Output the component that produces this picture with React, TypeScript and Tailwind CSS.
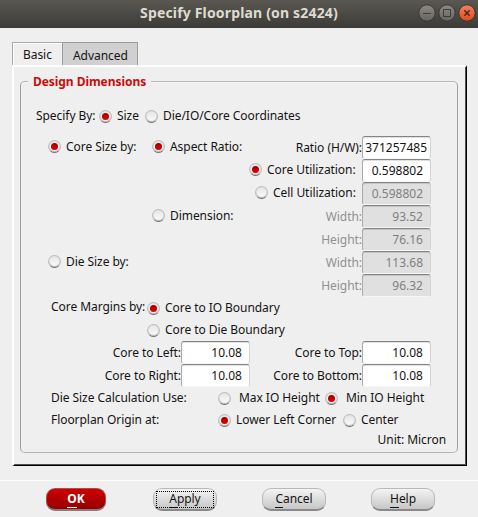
import type { ReactNode } from "react";

function Radio({ on = false, className = "" }: { on?: boolean; className?: string }) {
  return (
    <span
      className={`flex size-[13px] shrink-0 items-center justify-center rounded-full border border-[#bdbdbd] border-b-[#6c6c6c] bg-linear-to-b from-[#e4e4e4] to-[#fdfdfd] shadow-[inset_0_-1px_1px_rgba(0,0,0,0.28)] ${className}`}
    >
      {on && <span className="size-[7px] rounded-full bg-linear-to-b from-[#980000] to-[#e60000]" />}
    </span>
  );
}

function Text({ children, className = "" }: { children: ReactNode; className?: string }) {
  return <span className={`shrink-0 tracking-[-0.055px] whitespace-nowrap ${className}`}>{children}</span>;
}

function Field({ value, disabled = false, overflowing = false }: { value: string; disabled?: boolean; overflowing?: boolean }) {
  return (
    <span
      className={`flex h-[23px] w-[69px] shrink-0 items-center justify-end overflow-hidden rounded-[3px] border border-t-[#858585] border-r-[#d2d2d2] border-b-[#f6f6f6] border-l-[#aaaaaa] shadow-[inset_0_1px_0_rgba(0,0,0,0.12)] ${
        overflowing ? "pr-[3px]" : "pr-[7px]"
      } ${disabled ? "bg-[#e0e0e0] text-[#808080]" : "bg-white text-[#141414]"}`}
    >
      {value}
    </span>
  );
}

function Row({ children, className = "h-[23px]" }: { children?: ReactNode; className?: string }) {
  return <div className={`flex items-center ${className}`}>{children}</div>;
}

function Button({
  label,
  primary = false,
  focused = false,
  className = "",
}: {
  label: string;
  primary?: boolean;
  focused?: boolean;
  className?: string;
}) {
  const tone = primary
    ? "w-[60px] border-[#a85050] border-b-[#808080] from-[#cf0000] to-[#960000] font-bold text-white"
    : "w-[64px] border-[#b9b9b9] border-b-[#898989] from-[#f4f4f4] to-[#c6c6c6] text-[#141414]";
  return (
    <button
      className={`relative flex h-[23px] shrink-0 items-center justify-center rounded-[9px] border border-b-2 bg-linear-to-b ${tone} ${className}`}
    >
      <span className="tracking-[-0.055px]">
        <span className="border-b border-current">{label[0]}</span>
        {label.slice(1)}
      </span>
      {focused && <span className="absolute inset-x-[2px] top-[2px] bottom-[1px] border border-dotted border-black" />}
    </button>
  );
}

export default function App() {
  return (
    <div className="flex h-[517px] w-[478px] flex-col overflow-hidden bg-[#efefef] font-['Noto_Sans',sans-serif] text-[12px] leading-[16px] text-[#141414]">
      <header className="relative flex h-[28px] shrink-0 items-center bg-linear-to-b from-[#5a5851] to-[#3c3b37] pl-[140px]">
        <span className="-mt-[2px] text-[14px] font-bold tracking-[0.17px] whitespace-nowrap text-[#dfdbd2]">
          Specify Floorplan (on s2424)
        </span>
        <svg className="absolute top-0 right-0" width="62" height="28" viewBox="0 0 62 28" fill="none">
          <defs>
            <linearGradient id="grey" x2="0" y2="1">
              <stop stopColor="#8b8982" />
              <stop offset="1" stopColor="#66645e" />
            </linearGradient>
            <linearGradient id="orange" x2="0" y2="1">
              <stop stopColor="#f58161" />
              <stop offset="1" stopColor="#de4a1b" />
            </linearGradient>
          </defs>
          <circle cx="11" cy="13" r="8.2" fill="url(#grey)" stroke="#383732" />
          <circle cx="31" cy="13" r="8.2" fill="url(#grey)" stroke="#383732" />
          <circle cx="51" cy="13" r="8.2" fill="url(#orange)" stroke="#383732" />
          <path d="M7 13.5h8" stroke="#3c3b37" />
          <path d="M27.5 9.5h7v7h-7z" stroke="#3c3b37" />
          <path d="M48.3 10.3l5.4 5.4m0-5.4l-5.4 5.4" stroke="#43261b" strokeWidth="1.4" />
        </svg>
      </header>

      <nav className="mt-[14px] ml-[12px] flex h-[23px] shrink-0">
        <div className="flex w-[50px] items-center border-t border-l border-[#aaaaaa] pt-[1px] pl-[10px] shadow-[inset_1px_1px_0_#fff]">
          <Text>Basic</Text>
        </div>
        <div className="flex w-[76px] items-center border border-b-0 border-[#9c9c9c] bg-[#d0d0d0] pt-[3px] pl-[10px]">
          <Text>Advanced</Text>
        </div>
      </nav>

      <main className="ml-[12px] h-[401px] w-[455px] shrink-0 border-t-2 border-r border-b border-l-2 border-t-white border-r-black border-b-black border-l-white pt-[14px] pl-[6px] shadow-[inset_-1px_-1px_0_#505050]">
        <section className="relative h-[372px] w-[438px] rounded-[5px] border border-[#b4b4b4] border-r-[#a0a0a0] border-l-[#a0a0a0] shadow-[inset_0_1px_0_#f8f8f8]">
          <h2 className="absolute -top-[8px] left-[7px] bg-[#efefef] px-[5px] font-bold tracking-[-0.055px] whitespace-nowrap text-[#cc0a0a]">
            Design Dimensions
          </h2>
          <div className="pt-[23px]">
            <Row className="h-[22px]">
              <Text className="ml-[15px] w-[63px]">Specify By:</Text>
              <Radio on />
              <Text className="ml-[5px] w-[28px]">Size</Text>
              <Radio />
              <Text className="ml-[5px]">Die/IO/Core Coordinates</Text>
            </Row>
            <Row className="mt-[9px] h-[23px]">
              <Radio on className="ml-[27px] -mt-[2px]" />
              <Text className="-mt-[1px] ml-[5px] w-[86px]">Core Size by:</Text>
              <Radio on className="-mt-[2px]" />
              <Text className="-mt-[1px] ml-[5px] w-[82px]">Aspect Ratio:</Text>
              <Text className="w-[110px] text-right">Ratio (H/W):</Text>
              <Field value="371257485" overflowing />
            </Row>
            <Row>
              <Radio on className="ml-[228px] -mt-[2px]" />
              <Text className="-mt-[2px] ml-[5px] w-[95px]">Core Utilization:</Text>
              <Field value="0.598802" />
            </Row>
            <Row>
              <Radio className="ml-[234px] -mt-[2px]" />
              <Text className="-mt-[2px] ml-[5px] w-[89px]">Cell Utilization:</Text>
              <Field value="0.598802" disabled />
            </Row>
            <Row>
              <Radio className="ml-[131px] -mt-[2px]" />
              <Text className="-mt-[1px] ml-[5px] w-[82px]">Dimension:</Text>
              <Text className="w-[110px] text-right text-[#909090]">Width:</Text>
              <Field value="93.52" disabled />
            </Row>
            <Row>
              <Text className="w-[341px] text-right text-[#909090]">Height:</Text>
              <Field value="76.16" disabled />
            </Row>
            <Row>
              <Radio className="ml-[27px] -mt-[2px]" />
              <Text className="-mt-[1px] ml-[5px] w-[86px]">Die Size by:</Text>
              <Text className="w-[210px] text-right text-[#909090]">Width:</Text>
              <Field value="113.68" disabled />
            </Row>
            <Row>
              <Text className="w-[341px] text-right text-[#909090]">Height:</Text>
              <Field value="96.32" disabled />
            </Row>
            <Row className="h-[22px]">
              <Text className="-mt-[3px] ml-[30px] w-[96px]">Core Margins by:</Text>
              <Radio on />
              <Text className="ml-[5px]">Core to IO Boundary</Text>
            </Row>
            <Row className="h-[22px]">
              <Radio className="ml-[126px]" />
              <Text className="ml-[5px]">Core to Die Boundary</Text>
            </Row>
            <Row>
              <Text className="w-[160px] text-right">Core to Left:</Text>
              <Field value="10.08" />
              <Text className="w-[112px] text-right">Core to Top:</Text>
              <Field value="10.08" />
            </Row>
            <Row>
              <Text className="w-[160px] text-right">Core to Right:</Text>
              <Field value="10.08" />
              <Text className="w-[112px] text-right">Core to Bottom:</Text>
              <Field value="10.08" />
            </Row>
            <Row className="h-[22px]">
              <Text className="ml-[30px] w-[167px]">Die Size Calculation Use:</Text>
              <Radio />
              <Text className="ml-[8px] w-[86px]">Max IO Height</Text>
              <Radio on />
              <Text className="ml-[8px]">Min IO Height</Text>
            </Row>
            <Row className="h-[22px]">
              <Text className="ml-[30px] w-[167px]">Floorplan Origin at:</Text>
              <Radio on />
              <Text className="ml-[5px] w-[107px]">Lower Left Corner</Text>
              <Radio />
              <Text className="ml-[5px]">Center</Text>
            </Row>
            <Row className="h-[18px] justify-end pr-[11px]">
              <Text>Unit: Micron</Text>
            </Row>
          </div>
        </section>
      </main>

      <footer className="mt-[14px] flex border-t border-white pt-[7px] pl-[46px]">
        <Button label="OK" primary />
        <Button label="Apply" focused className="ml-[47px]" />
        <Button label="Cancel" className="ml-[45px]" />
        <Button label="Help" className="ml-[45px]" />
      </footer>
    </div>
  );
}
